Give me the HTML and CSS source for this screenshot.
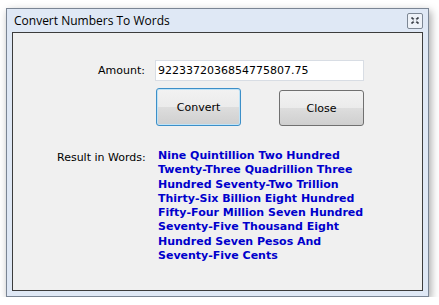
FILE: index.html
```html
<!DOCTYPE html>
<html lang="en">
<head>
    <meta charset="UTF-8">
    <title>Convert Numbers To Words</title>
    <link rel="stylesheet" href="styles.css">
</head>
<body>
    <div class="window">
        <div class="titlebar">
            <span class="title">Convert Numbers To Words</span>
            <span class="close-box">
                <svg width="8" height="7" viewBox="0 0 8 7">
                    <path d="M0.5 0.5 L7.5 6.5 M7.5 0.5 L0.5 6.5" stroke="#3a3f47" stroke-width="1.6" fill="none"/>
                    <rect x="2.5" y="2" width="3" height="3" fill="#eef2f8"/>
                </svg>
            </span>
        </div>
        <div class="client">
            <div class="row">
                <label class="label">Amount:</label>
                <input class="amount" type="text" value="9223372036854775807.75">
            </div>
            <div class="buttons">
                <button class="btn btn-focus">Convert</button>
                <button class="btn">Close</button>
            </div>
            <div class="result">
                <span class="label">Result in Words:</span>
                <p class="words">Nine Quintillion Two Hundred Twenty-Three Quadrillion Three Hundred Seventy-Two Trillion Thirty-Six Billion Eight Hundred Fifty-Four Million Seven Hundred Seventy-Five Thousand Eight Hundred Seven Pesos And Seventy-Five Cents</p>
            </div>
        </div>
    </div>
</body>
</html>
```

FILE: styles.css
```css
body {
    margin: 0;
    background: #ffffff;
    font-family: "DejaVu Sans", Tahoma, sans-serif;
    font-size: 11px;
    color: #000;
}
/* Jendela */
.window {
    margin: 8px 0 0 6px;
    width: 423px;
    height: 289px;
    background: #dfe8f5;
    border: 1px solid #7a8594;
    box-shadow: 2px 3px 8px rgba(0, 0, 0, 0.35);
    display: flex;
    flex-direction: column;
    box-sizing: border-box;
}
.titlebar {
    height: 23px;
    display: flex;
    align-items: center;
    justify-content: space-between;
    padding: 0 5px 0 7px;
}
.title {
    font-family: "Open Sans", sans-serif;
    font-size: 12px;
    color: #000;
}
.close-box {
    width: 14px;
    height: 14px;
    border: 1px solid #7d8794;
    border-radius: 2px;
    background: #eef2f8;
    display: flex;
    align-items: center;
    justify-content: center;
}
.client {
    flex: 1;
    margin: 0 5px 5px 5px;
    background: #f0f0f0;
    border: 1px solid #3c3c3c;
}
.row {
    display: flex;
    align-items: center;
    margin-top: 27px;
}
.label {
    width: 132px;
    text-align: right;
    padding-right: 10px;
}
.amount {
    width: 209px;
    height: 21px;
    box-sizing: border-box;
    border: 1px solid #d8dde4;
    background: #fff;
    font-family: inherit;
    font-size: 11px;
    padding: 0 2px;
}
.buttons {
    display: flex;
    gap: 38px;
    margin: 7px 0 0 143px;
    align-items: flex-end;
}
.btn {
    width: 85px;
    height: 36px;
    border: 1px solid #707070;
    border-radius: 3px;
    background: linear-gradient(#f2f2f2 0%, #ebebeb 50%, #dddddd 51%, #cfcfcf 100%);
    font-family: inherit;
    font-size: 11px;
    color: #000;
}
.btn-focus {
    height: 38px;
    border-color: #3c8fc8;
    box-shadow: inset 0 0 0 1px #bfe3f7;
}
.result {
    display: flex;
    margin-top: 23px;
}
.result .label {
    text-align: left;
    padding: 2px 0 0 44px;
    width: 101px;
}
.words {
    margin: 0;
    width: 210px;
    color: #0000cc;
    font-weight: bold;
    font-size: 11px;
    line-height: 14.3px;
}
```
